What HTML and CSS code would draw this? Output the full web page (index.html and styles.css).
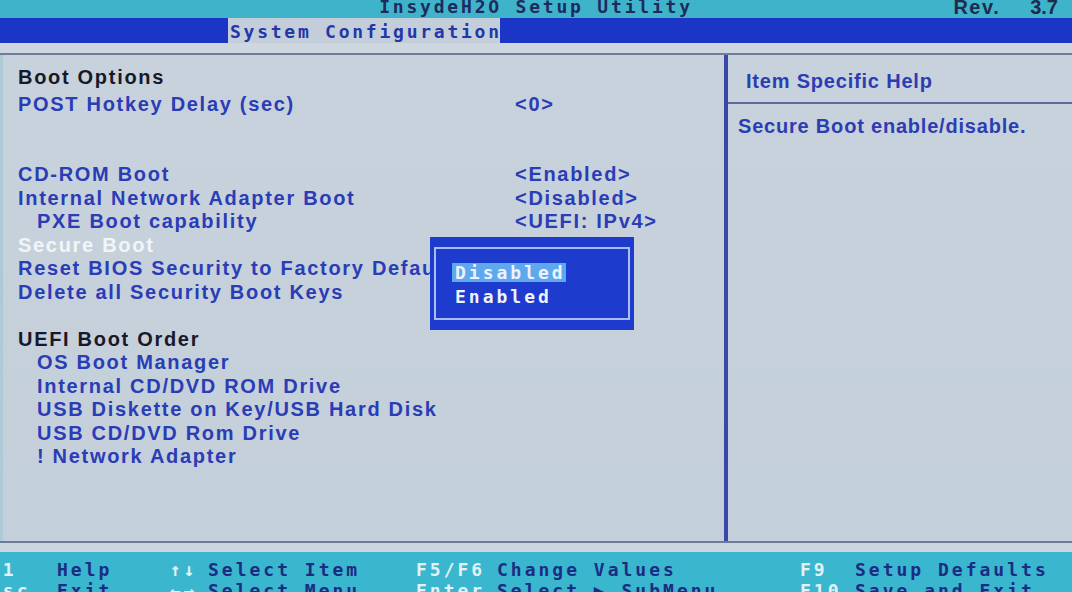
FILE: index.html
```html
<!DOCTYPE html>
<html>
<head>
<meta charset="utf-8">
<title>InsydeH2O Setup Utility</title>
<link rel="stylesheet" href="styles.css">
</head>
<body>
<div class="screen">
  <header class="topbar">
    <span></span>
    <span class="title">InsydeH2O Setup Utility</span>
    <span class="rev"><span>Rev.</span><span>3.7</span></span>
  </header>
  <nav class="tabbar"><span class="tab">System Configuration</span></nav>
  <div class="rule-top"></div>
  <main class="main">
    <section class="menu">
      <div class="row head first">Boot Options</div>
      <div class="row"><span class="label">POST Hotkey Delay (sec)</span><span class="value">&lt;0&gt;</span></div>
      <div class="row blank"></div>
      <div class="row blank"></div>
      <div class="row"><span class="label">CD-ROM Boot</span><span class="value">&lt;Enabled&gt;</span></div>
      <div class="row"><span class="label">Internal Network Adapter Boot</span><span class="value">&lt;Disabled&gt;</span></div>
      <div class="row sub"><span class="label">PXE Boot capability</span><span class="value">&lt;UEFI: IPv4&gt;</span></div>
      <div class="row selected"><span class="label">Secure Boot</span><span class="value">&lt;Disabled&gt;</span></div>
      <div class="row"><span class="label">Reset BIOS Security to Factory Default</span></div>
      <div class="row"><span class="label">Delete all Security Boot Keys</span></div>
      <div class="row blank"></div>
      <div class="row head">UEFI Boot Order</div>
      <div class="row sub"><span class="label">OS Boot Manager</span></div>
      <div class="row sub"><span class="label">Internal CD/DVD ROM Drive</span></div>
      <div class="row sub"><span class="label">USB Diskette on Key/USB Hard Disk</span></div>
      <div class="row sub"><span class="label">USB CD/DVD Rom Drive</span></div>
      <div class="row sub"><span class="label">! Network Adapter</span></div>

      <div class="popup">
        <div class="popup-inner">
          <span class="opt active">Disabled</span>
          <span class="opt">Enabled</span>
        </div>
      </div>
    </section>
    <aside class="help">
      <div class="help-head">Item Specific Help</div>
      <div class="help-body">Secure Boot enable/disable.</div>
    </aside>
  </main>
  <div class="rule-bottom"></div>
  <footer class="keys">
    <span class="k">F1</span><span class="d">Help</span>
    <span class="k">↑↓</span><span class="d">Select Item</span>
    <span class="k">F5/F6</span><span class="d">Change Values</span>
    <span class="k">F9</span><span class="d">Setup Defaults</span>
    <span class="k">Esc</span><span class="d">Exit</span>
    <span class="k">←→</span><span class="d">Select Menu</span>
    <span class="k">Enter</span><span class="d">Select ▶ SubMenu</span>
    <span class="k">F10</span><span class="d">Save and Exit</span>
  </footer>
</div>
</body>
</html>
```
FILE: styles.css
```css
html, body {
  margin: 0;
  padding: 0;
  background: #c6d0db;
}

.screen {
  width: 1072px;
  height: 592px;
  overflow: hidden;
  display: flex;
  flex-direction: column;
  font-family: "Liberation Sans", Arial, sans-serif;
}

/* ---------- top title bar ---------- */
.topbar {
  height: 18px;
  flex: none;
  background: #3fb3c9;
  display: grid;
  grid-template-columns: 1fr auto 1fr;
  overflow: hidden;
}

.title {
  font-family: "DejaVu Sans Mono", monospace;
  font-weight: bold;
  font-size: 18px;
  letter-spacing: 2.8px;
  line-height: 18px;
  margin-top: -2px;
  color: #1d2a5e;
  white-space: pre;
}

.rev {
  justify-self: end;
  display: flex;
  gap: 30px;
  padding-right: 14px;
  font-weight: bold;
  font-size: 20px;
  line-height: 18px;
  margin-top: -2px;
  color: #1f2a4e;
}

.rev span:first-child {
  letter-spacing: 1.5px;
}

/* ---------- tab bar ---------- */
.tabbar {
  height: 25px;
  flex: none;
  background: #1b35c6;
  display: flex;
}

.tab {
  margin-left: 228px;
  width: 272px;
  box-sizing: border-box;
  padding: 2px 0 0 2px;
  background: #c3ceda;
  font-family: "DejaVu Sans Mono", monospace;
  font-weight: bold;
  font-size: 18px;
  letter-spacing: 2.75px;
  line-height: 23px;
  color: #2436a8;
  white-space: nowrap;
}

.rule-top {
  height: 10px;
  flex: none;
  background: #ced7e0;
  border-bottom: 2px solid #6f7e9a;
}

.rule-bottom {
  height: 9px;
  flex: none;
  background: #cdd6df;
  border-top: 2px solid #6b7a96;
}

/* ---------- main panels ---------- */
.main {
  height: 486px;
  flex: none;
  display: flex;
  background: linear-gradient(to bottom, #c8d2dc, #c3cfda);
}

.menu {
  position: relative;
  width: 728px;
  flex: none;
  box-sizing: border-box;
  padding: 11px 0 0 15px;
  border-left: 3px solid #aecad6;
  border-right: 4px solid #3a48a8;
  font-weight: bold;
  font-size: 20px;
  letter-spacing: 1.7px;
  color: #2a3cb6;
}

.row {
  display: grid;
  grid-template-columns: 497px auto;
  height: 23.5px;
  line-height: 23.5px;
  white-space: nowrap;
}

.row.head {
  display: block;
  color: #17192b;
}

.row.first {
  margin-bottom: 3px;
}

.row.sub .label {
  padding-left: 19px;
}

.row.selected {
  color: #f2f5f8;
}

.row.selected .value {
  letter-spacing: 1px;
}

/* ---------- popup ---------- */
.popup {
  position: absolute;
  left: 427px;
  top: 182px;
  width: 204px;
  height: 93px;
  box-sizing: border-box;
  padding: 10px 4px;
  background: #1d3bcc;
  z-index: 2;
}

.popup-inner {
  height: 100%;
  box-sizing: border-box;
  border: 2px solid #a9bdf2;
  padding: 14px 0 0 16px;
  display: flex;
  flex-direction: column;
  align-items: flex-start;
  gap: 5px;
}

.opt {
  font-family: "DejaVu Sans Mono", monospace;
  font-weight: bold;
  font-size: 18px;
  letter-spacing: 3px;
  line-height: 19px;
  padding: 0 0 0 3px;
  color: #eef2ff;
}

.opt.active {
  background: #5ea9ee;
}

/* ---------- help panel ---------- */
.help {
  flex: 1;
  font-weight: bold;
  font-size: 20px;
  letter-spacing: 0.8px;
  line-height: 23.5px;
  color: #2c3db2;
  white-space: nowrap;
}

.help-head {
  height: 49px;
  box-sizing: border-box;
  padding: 15px 0 0 18px;
  border-bottom: 2px solid #5b6a9a;
}

.help-body {
  padding: 11px 0 0 10px;
}

/* ---------- footer ---------- */
.keys {
  flex: none;
  height: 40px;
  box-sizing: border-box;
  padding-top: 7px;
  margin-left: -11px;
  background: #3ab6cf;
  display: grid;
  grid-template-columns: 68px 113px 38px 208px 81px 303px 55px 1fr;
  grid-auto-rows: 21px;
  font-family: "DejaVu Sans Mono", monospace;
  font-weight: bold;
  font-size: 18px;
  letter-spacing: 3px;
  line-height: 21px;
  white-space: nowrap;
  overflow: hidden;
}

.keys .k {
  color: #e4f2f6;
}

.keys .d {
  color: #1b2c82;
}
```
